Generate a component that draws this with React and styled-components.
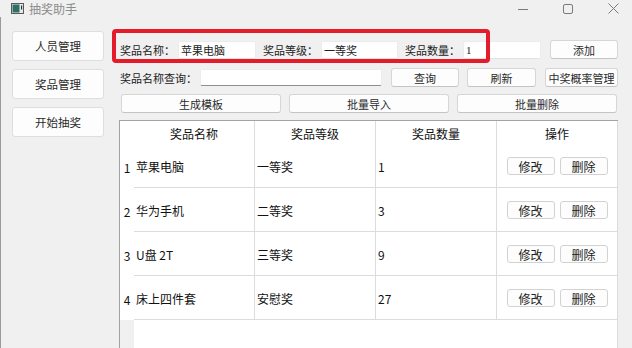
import React from "react"
import styled, { createGlobalStyle } from "styled-components"

const sans = `"Noto Sans CJK SC", "Noto Sans", sans-serif`
const song = `"Liberation Serif", "Noto Sans CJK SC", serif`

const GlobalStyle = createGlobalStyle`
  html, body {
    margin: 0;
    padding: 0;
    overflow: hidden;
    background: #f0f0f0;
  }
  * {
    box-sizing: border-box;
  }
`

const Window = styled.div`
  width: 632px;
  height: 348px;
  display: flex;
  flex-direction: column;
  background: #f0f0f0;
  overflow: hidden;
`

const TitleBar = styled.div`
  height: 17px;
  display: flex;
  align-items: center;
  padding-left: 11px;
  font-family: ${sans};
  font-size: 12px;
  color: #8c8c8c;
`

const TitleText = styled.span`
  margin-left: 5px;
  line-height: 1;
`

const Controls = styled.div`
  margin-left: auto;
  display: flex;
  align-items: center;
  gap: 35px;
  padding-right: 13px;
`

const Main = styled.div`
  flex: 1;
  display: flex;
  padding-top: 14px;
  border-left: 1px solid #9a9a9a;
  min-height: 0;
`

const Nav = styled.div`
  width: 92px;
  margin: 0 15px 0 11px;
  display: flex;
  flex-direction: column;
  gap: 8px;
`

const NavButton = styled.button`
  height: 30px;
  background: #fdfdfd;
  border: 1px solid #dedede;
  border-radius: 3px;
  font-family: ${song};
  font-size: 11.5px;
  color: #2a2a2a;
  padding: 0;
`

const Panel = styled.div`
  width: 499px;
  display: flex;
  flex-direction: column;
  padding-top: 9px;
  min-height: 0;
`

const FormRow = styled.div`
  position: relative;
  display: flex;
  align-items: center;
  height: 19px;
  padding-left: ${(p) => p.indent || 1}px;
  gap: ${(p) => p.gap || 0}px;
  margin-bottom: ${(p) => p.after || 0}px;
`

const Label = styled.span`
  width: ${(p) => p.w}px;
  flex-shrink: 0;
  font-family: ${song};
  font-size: 11px;
  color: #222;
  white-space: nowrap;
  margin-left: ${(p) => p.ml || 0}px;
`

const Field = styled.div`
  width: ${(p) => (p.w ? `${p.w}px` : "auto")};
  flex: ${(p) => (p.w ? "0 0 auto" : "1")};
  height: ${(p) => p.h || 18}px;
  background: #fff;
  border: 1px solid #ececec;
  border-bottom-color: ${(p) => (p.underline ? "#8f8f8f" : "#e2e2e2")};
  border-radius: 2px;
  display: flex;
  align-items: center;
  padding-left: 2px;
  font-family: ${song};
  font-size: 11px;
  color: #222;
`

const Button = styled.button`
  width: ${(p) => p.w}px;
  height: 19px;
  flex-shrink: 0;
  margin-left: ${(p) => p.ml || 0}px;
  background: #fdfdfd;
  border: 1px solid #d6d6d6;
  border-bottom-color: #c4c4c4;
  border-radius: 3px;
  font-family: ${song};
  font-size: 11px;
  color: #2a2a2a;
  padding: 0;
  white-space: nowrap;
`

const Highlight = styled.div`
  position: absolute;
  left: -7px;
  top: -11px;
  width: 378px;
  height: 34px;
  border: 4px solid #e41b2b;
  border-radius: 4px;
  pointer-events: none;
`

const Table = styled.div`
  flex: 1;
  margin-top: 7px;
  display: grid;
  grid-template-columns: 14px repeat(4, 121px);
  grid-template-rows: 23px repeat(4, 44px) 1fr;
  border-top: 1px solid #a3a3a3;
  border-left: 1px solid #a3a3a3;
  background: #fff;
  font-family: ${sans};
  font-size: 12px;
  color: #111;
`

const Head = styled.div`
  display: flex;
  align-items: center;
  justify-content: center;
  border-right: ${(p) => (p.corner ? "none" : "1px solid #dcdcdc")};
  padding-top: 1px;
`

const RowNum = styled.div`
  display: flex;
  align-items: center;
  justify-content: center;
  padding-top: 2px;
`

const Cell = styled.div`
  display: flex;
  align-items: center;
  justify-content: ${(p) => (p.center ? "center" : "flex-start")};
  gap: 5px;
  padding-left: ${(p) => (p.center ? 0 : 2)}px;
  padding-top: 1px;
  border-right: 1px solid #dcdcdc;
  border-bottom: 1px solid #dcdcdc;
`

const SmallButton = styled.button`
  width: 48px;
  height: 18px;
  background: #fdfdfd;
  border: 1px solid #d2d2d2;
  border-radius: 3px;
  font-family: ${sans};
  font-size: 12px;
  color: #222;
  padding: 0;
`

const Gutter = styled.div`
  background: #f0f0f0;
`

const Blank = styled.div`
  grid-column: 2 / 6;
  border-right: 1px solid #dcdcdc;
`

const AppIcon = () => (
  <svg width="13" height="11" viewBox="0 0 13 11">
    <rect x="0.5" y="0.5" width="12" height="10" fill="#e9e9e9" stroke="#5a5a5a" />
    <rect x="1.5" y="1.5" width="7" height="8" fill="#2f6f64" />
    <rect x="10" y="2.5" width="1.2" height="4" fill="#333" />
  </svg>
)

const prizes = [
  { name: "苹果电脑", level: "一等奖", count: 1 },
  { name: "华为手机", level: "二等奖", count: 3 },
  { name: "U盘 2T", level: "三等奖", count: 9 },
  { name: "床上四件套", level: "安慰奖", count: 27 },
]

export default function App() {
  return (
    <>
      <GlobalStyle />
      <Window>
        <TitleBar>
          <AppIcon />
          <TitleText>抽奖助手</TitleText>
          <Controls>
            <svg width="10" height="10" viewBox="0 0 10 10">
              <line x1="0" y1="5.5" x2="10" y2="5.5" stroke="#7a7a7a" />
            </svg>
            <svg width="10" height="10" viewBox="0 0 10 10">
              <rect x="0.5" y="0.5" width="9" height="9" rx="1.5" fill="none" stroke="#7a7a7a" />
            </svg>
            <svg width="11" height="11" viewBox="0 0 11 11">
              <path d="M0.5 0.5 L10.5 10.5 M10.5 0.5 L0.5 10.5" stroke="#7a7a7a" />
            </svg>
          </Controls>
        </TitleBar>

        <Main>
          <Nav>
            <NavButton>人员管理</NavButton>
            <NavButton>奖品管理</NavButton>
            <NavButton>开始抽奖</NavButton>
          </Nav>

          <Panel>
            <FormRow after={9}>
              <Label w={58}>奖品名称：</Label>
              <Field w={78}>苹果电脑</Field>
              <Label w={58} ml={7}>奖品等级：</Label>
              <Field w={77}>一等奖</Field>
              <Label w={58} ml={7}>奖品数量：</Label>
              <Field w={78}>1</Field>
              <Button w={68} ml={9}>添加</Button>
              <Highlight />
            </FormRow>

            <FormRow after={7}>
              <Label w={80}>奖品名称查询：</Label>
              <Field h={17} underline />
              <Button w={68} ml={9}>查询</Button>
              <Button w={69} ml={8}>刷新</Button>
              <Button w={73} ml={9}>中奖概率管理</Button>
            </FormRow>

            <FormRow indent={2} gap={8}>
              <Button w={160}>生成模板</Button>
              <Button w={160}>批量导入</Button>
              <Button w={160}>批量删除</Button>
            </FormRow>

            <Table>
              <Head corner />
              <Head>奖品名称</Head>
              <Head>奖品等级</Head>
              <Head>奖品数量</Head>
              <Head>操作</Head>
              {prizes.map((p, i) => (
                <React.Fragment key={p.name}>
                  <RowNum>{i + 1}</RowNum>
                  <Cell>{p.name}</Cell>
                  <Cell>{p.level}</Cell>
                  <Cell>{p.count}</Cell>
                  <Cell center>
                    <SmallButton>修改</SmallButton>
                    <SmallButton>删除</SmallButton>
                  </Cell>
                </React.Fragment>
              ))}
              <Gutter />
              <Blank />
            </Table>
          </Panel>
        </Main>
      </Window>
    </>
  )
}
